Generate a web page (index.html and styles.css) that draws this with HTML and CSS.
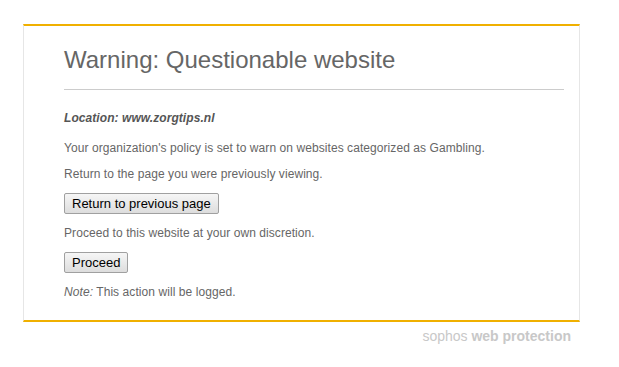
FILE: index.html
```html
<!DOCTYPE html>
<html lang="en">
<head>
    <meta charset="UTF-8">
    <title>Warning: Questionable website</title>
    <link rel="stylesheet" href="styles.css">
</head>
<body>
    <div class="page">
        <div class="box">
            <h1 class="title">Warning: Questionable website</h1>
            <p class="location">Location: www.zorgtips.nl</p>
            <p>Your organization's policy is set to warn on websites categorized as Gambling.</p>
            <p>Return to the page you were previously viewing.</p>
            <button class="btn">Return to previous page</button>
            <p>Proceed to this website at your own discretion.</p>
            <button class="btn">Proceed</button>
            <p class="note"><em>Note:</em> This action will be logged.</p>
        </div>
        <div class="brand">sophos <b>web protection</b></div>
    </div>
</body>
</html>
```

FILE: styles.css
```css
body {
    margin: 0;
    background: #fff;
    font-family: "Liberation Sans", Arial, sans-serif;
}

.page {
    width: 557px;
    margin: 24px 0 0 23px;
}

.box {
    border-top: 2px solid #f0b000;
    border-bottom: 2px solid #f0b000;
    border-left: 1px solid #e6e6e6;
    border-right: 1px solid #e6e6e6;
    padding: 20px 15px 21px 40px;
}

.title {
    margin: 0;
    padding-bottom: 15px;
    border-bottom: 1px solid #cccccc;
    font-size: 24px;
    font-weight: normal;
    line-height: 28px;
    color: #666666;
}

.box p {
    margin: 0 0 12px;
    font-size: 12px;
    line-height: 14px;
    letter-spacing: 0.07px;
    color: #666666;
}

.box .location {
    margin-top: 21px;
    margin-bottom: 16px;
    font-weight: bold;
    font-style: italic;
    color: #555555;
}

.btn {
    display: block;
    height: 21px;
    margin: 0 0 12px;
    padding: 0 7px;
    font-family: "Liberation Sans", Arial, sans-serif;
    font-size: 13px;
    color: #000;
    background: linear-gradient(#f6f6f6, #dddddd);
    border: 1px solid #a0a0a0;
    border-radius: 2px;
}

.box .note {
    margin-bottom: 0;
}

.brand {
    text-align: right;
    padding: 6px 9px 0 0;
    font-size: 14px;
    color: #c8c8c8;
}
```
